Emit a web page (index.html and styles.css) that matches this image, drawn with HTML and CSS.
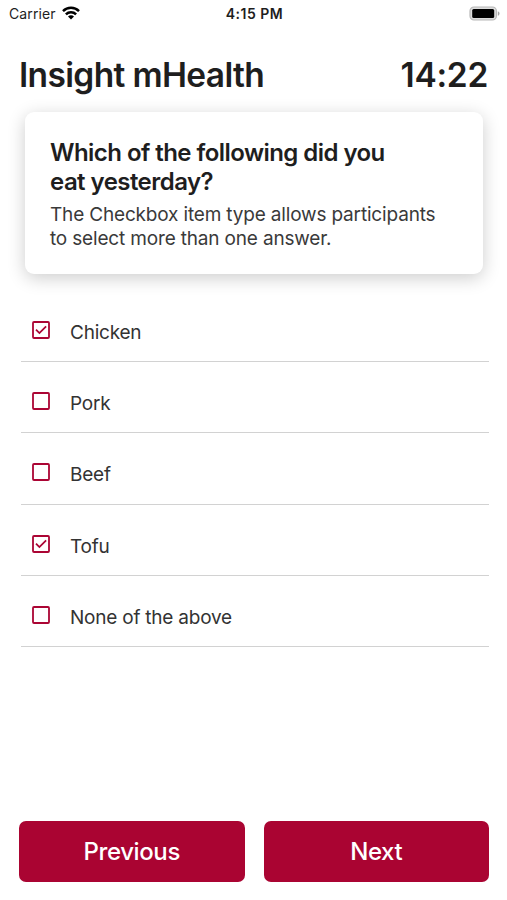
FILE: index.html
```html
<!DOCTYPE html>
<html lang="en">
<head>
<meta charset="UTF-8" />
<meta name="viewport" content="width=device-width, initial-scale=1" />
<title>Insight mHealth</title>
<link rel="stylesheet" href="styles.css">
</head>
<body>

  <div class="status-bar">
    <div class="carrier">
      <span>Carrier</span>
      <svg class="wifi" viewBox="0 0 18 14" fill="none" stroke="#000" stroke-width="2.5">
        <path d="M1 5.1a11.4 11.4 0 0 1 16 0" />
        <path d="M3.9 8.3a7.2 7.2 0 0 1 10.2 0" />
        <path d="M9 13.6L6 10.6a4.2 4.2 0 0 1 6 0z" fill="#000" stroke="none" />
      </svg>
    </div>
    <span class="clock">4:15 PM</span>
    <svg class="battery" viewBox="0 0 31 15">
      <rect x="1" y="1" width="26.4" height="13" rx="4" fill="#ddd" stroke="#b8b8b8" stroke-width="1.2" />
      <rect x="3.2" y="3" width="22" height="9" rx="1.5" />
      <path d="M28.8 5.2c2.3.8 2.3 3.8 0 4.6z" fill="#a5a5a5" />
    </svg>
  </div>

  <header>
    <h1>Insight mHealth</h1>
    <span class="timer">14:22</span>
  </header>

  <main>
    <section class="question">
      <h2>Which of the following did you eat yesterday?</h2>
      <p>The Checkbox item type allows participants to select more than one answer.</p>
    </section>

    <ul class="answers">
      <li>
        <svg class="checkbox" viewBox="0 0 18 18"><rect x="1" y="1" width="16" height="16" rx="1" /><path d="M4 8.7l3.4 3.4 6.7-6.7" /></svg>
        <span>Chicken</span>
      </li>
      <li>
        <svg class="checkbox" viewBox="0 0 18 18"><rect x="1" y="1" width="16" height="16" rx="1" /></svg>
        <span>Pork</span>
      </li>
      <li>
        <svg class="checkbox" viewBox="0 0 18 18"><rect x="1" y="1" width="16" height="16" rx="1" /></svg>
        <span>Beef</span>
      </li>
      <li>
        <svg class="checkbox" viewBox="0 0 18 18"><rect x="1" y="1" width="16" height="16" rx="1" /><path d="M4 8.7l3.4 3.4 6.7-6.7" /></svg>
        <span>Tofu</span>
      </li>
      <li>
        <svg class="checkbox" viewBox="0 0 18 18"><rect x="1" y="1" width="16" height="16" rx="1" /></svg>
        <span>None of the above</span>
      </li>
    </ul>
  </main>

  <footer>
    <button type="button">Previous</button>
    <button type="button">Next</button>
  </footer>

</body>
</html>
```

FILE: styles.css
```css
* {
  box-sizing: border-box;
}

body {
  font-family: Inter, sans-serif;
  margin: 0;
  height: 900px;
  display: flex;
  flex-direction: column;
  background: #fff;
  color: #1e1e1e;
}

h1, h2, p, ul {
  margin: 0;
  padding: 0;
}

.status-bar {
  display: grid;
  grid-template-columns: 1fr auto 1fr;
  align-items: center;
  height: 26px;
  padding: 0 7px 0 9px;
  font-size: 14px;
}

.carrier {
  display: flex;
  align-items: center;
  gap: 6px;
  letter-spacing: 0.1px;
}

.wifi {
  width: 18px;
  height: 14px;
}

.clock {
  font-weight: 600;
  letter-spacing: 0.5px;
}

.battery {
  width: 31px;
  height: 15px;
  justify-self: end;
}

header {
  display: flex;
  justify-content: space-between;
  align-items: center;
  height: 86px;
  padding: 12px 19px 0;
}

h1, .timer {
  font-size: 33.5px;
  font-weight: 600;
  line-height: 40px;
}

h1 {
  letter-spacing: -0.65px;
}

.timer {
  letter-spacing: -0.3px;
}

main {
  flex: 1;
}

.question {
  height: 162px;
  margin: 0 24px 0 25px;
  padding: 26px 40px 0 25px;
  border-radius: 9px;
  background: #fff;
  box-shadow: 0 4px 18px rgba(0, 0, 0, 0.2);
}

h2 {
  max-width: 350px;
  font-size: 24px;
  font-weight: 600;
  line-height: 29px;
  letter-spacing: -0.55px;
}

p {
  margin-top: 7px;
  font-size: 19px;
  line-height: 23.5px;
  letter-spacing: -0.17px;
  color: #3a3a3a;
}

.answers {
  margin: 17px 18px 0 21px;
  list-style: none;
}

.answers li {
  display: flex;
  align-items: center;
  height: 71.2px;
  padding: 13px 11px 0;
  border-bottom: 1px solid #d2d2d2;
  font-size: 19px;
  letter-spacing: -0.22px;
  color: #333;
}

.checkbox {
  width: 18px;
  height: 18px;
  margin: 0 20px 5px 0;
  fill: none;
  stroke: #ab0534;
  stroke-width: 1.8;
}

footer {
  display: flex;
  gap: 19px;
  padding: 0 18px 18px 19px;
}

button {
  flex: 1;
  height: 61px;
  border: none;
  border-radius: 7px;
  background: #aa0432;
  color: #fff;
  font-family: inherit;
  font-size: 24px;
  font-weight: 500;
  letter-spacing: -0.4px;
  cursor: pointer;
}
```
